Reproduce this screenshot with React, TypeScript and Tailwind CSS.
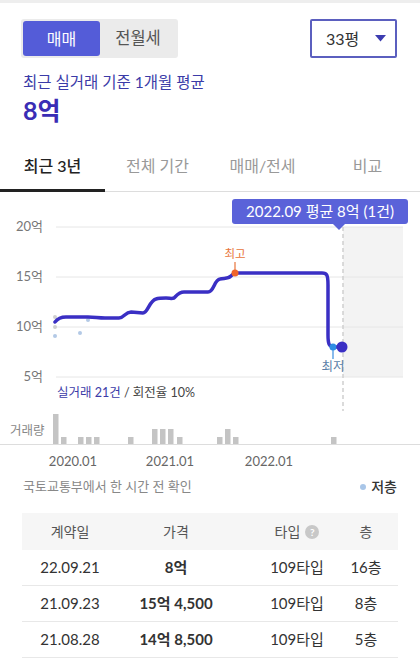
import { useState } from 'react';

const TABS = ['최근 3년', '전체 기간', '매매/전세', '비교'];

// volume bars: [x, height]
const BARS: [number, number][] = [
  [53, 30], [61, 7], [78, 7], [86, 7], [94, 7], [128, 7],
  [152, 15], [160, 15], [168, 15], [177, 7],
  [217, 7], [225, 15], [233, 7], [331, 7],
];

const ROWS = [
  { date: '22.09.21', price: '8억', type: '109타입', floor: '16층' },
  { date: '21.09.23', price: '15억 4,500', type: '109타입', floor: '8층' },
  { date: '21.08.28', price: '14억 8,500', type: '109타입', floor: '5층' },
];

const LINE =
  'M55 323 C58 319 61 318 66 318 L88 318 C95 318 98 319 105 319 L119 319 C124 319 125 313 131 313 L143 314 ' +
  'C148 314 149 302 156 300 C159 299 161 299 166 299 C170 299 171 300 174 299 C177 296 179 293 184 293 L208 293 ' +
  'C214 293 214 281 220 280 C225 279 228 280 231 277 C233 275 234 274 236 274 L322 274 C327 274 328 276 328 286 ' +
  'L328 336 C328 345 329 348 334 348 L342 348';

export default function App() {
  const [deal, setDeal] = useState<'sale' | 'rent'>('sale');
  const [tab, setTab] = useState(0);

  return (
    <div className="w-[420px] bg-white font-[Lato,'Noto_Sans_CJK_KR',sans-serif] text-[#333]">
      <div className="h-[3px] bg-[#eeeeee]" />

      <div className="flex items-center justify-between pl-[21px] pr-[23px] pt-4">
        <div className="flex h-[39px] w-[157px] items-center rounded-[3px] bg-[#ebebeb] p-[2px]">
          <button
            type="button"
            onClick={() => setDeal('sale')}
            className={[
              'h-full w-[77px] rounded-[3px] text-[16px]',
              deal === 'sale' ? 'bg-[#545cd8] text-white' : 'text-[#555]',
            ].join(' ')}
          >
            매매
          </button>
          <button
            type="button"
            onClick={() => setDeal('rent')}
            className={[
              'h-full flex-1 rounded-[3px] text-[16.5px]',
              deal === 'rent' ? 'bg-[#545cd8] text-white' : 'text-[#555]',
            ].join(' ')}
          >
            전월세
          </button>
        </div>
        <button
          type="button"
          className="flex h-[39px] w-[87px] items-center justify-between rounded-[2px] border-2 border-[#5b5fbf] pl-[14px] pr-[9px] text-[16px] text-[#333]"
        >
          33평
          <svg width="11" height="7" viewBox="0 0 11 7">
            <path d="M0 0 H11 L5.5 6.5 Z" fill="#3c3cb0" />
          </svg>
        </button>
      </div>

      <div className="px-[23px] pt-[14px]">
        <div className="text-[15.5px] leading-5 text-[#3b3ba8]">최근 실거래 기준 1개월 평균</div>
        <div className="mt-[2px] text-[25px] font-bold leading-8 text-[#3a2db5]">8억</div>
      </div>

      {/* period tabs */}
      <div className="mt-[19px] grid grid-cols-4 border-b border-[#ddd]">
        {TABS.map((t, i) => (
          <button
            key={t}
            type="button"
            onClick={() => setTab(i)}
            className={[
              '-mb-px h-[47px] border-b-[3px] pb-[3px] text-[16px]',
              i === tab ? 'border-[#222] font-medium text-[#222]' : 'border-transparent text-[#999]',
            ].join(' ')}
          >
            {t}
          </button>
        ))}
      </div>

      {/* chart */}
      <div className="relative h-[284px]">
        <svg width="420" height="284" viewBox="0 193 420 284" className="block">
          <rect x="343" y="228" width="60" height="150" fill="#f3f3f3" />
          {[228, 278, 328, 378].map((y) => (
            <line key={y} x1="56" x2="403" y1={y} y2={y} stroke="#e6e6e6" strokeWidth="1" />
          ))}
          {[
            ['20억', 232],
            ['15억', 282],
            ['10억', 332],
            ['5억', 382],
          ].map(([l, y]) => (
            <text key={l} x="43" y={y} textAnchor="end" fontSize="13" fill="#777">
              {l}
            </text>
          ))}
          <line x1="343" x2="343" y1="228" y2="412" stroke="#cfcfcf" strokeWidth="1.5" strokeDasharray="4 3" />

          {/* individual deals */}
          <circle cx="55" cy="318" r="2" fill="#cfcfcf" />
          <circle cx="55" cy="328" r="2" fill="#cfcfcf" />
          <circle cx="55" cy="337" r="2" fill="#b3c9e6" />
          <circle cx="80" cy="334" r="2" fill="#b3c9e6" />
          <circle cx="88" cy="321" r="2" fill="#b3c9e6" />

          <path d={LINE} fill="none" stroke="#3a2fc4" strokeWidth="3.5" strokeLinecap="round" strokeLinejoin="round" />

          <text x="235" y="259" textAnchor="middle" fontSize="11.5" fill="#e8743b">최고</text>
          <line x1="235" x2="235" y1="263" y2="272" stroke="#e8743b" strokeWidth="1.2" />
          <circle cx="235" cy="274" r="3.5" fill="#f0642a" />

          <line x1="333" x2="333" y1="350" y2="360" stroke="#3a8ee0" strokeWidth="1.2" />
          <circle cx="333" cy="348" r="3.5" fill="#2f8de4" />
          <text x="333" y="372" textAnchor="middle" fontSize="12.5" fill="#5b7fa8">최저</text>
          <circle cx="342" cy="348" r="5.5" fill="#3a2fc4" />

          <text x="57" y="398" fontSize="12.5" fill="#444">
            <tspan fill="#3b3ba8">실거래 21건</tspan> / 회전율 10%
          </text>

          <text x="10" y="436" fontSize="12.5" fill="#888">거래량</text>
          {BARS.map(([x, h]) => (
            <rect key={x} x={x} y={445 - h} width="5.5" height={h} fill="#c4c4c4" />
          ))}
          <line x1="0" x2="420" y1="445.5" y2="445.5" stroke="#ddd" strokeWidth="1" />

          {[
            ['2020.01', 73],
            ['2021.01', 170],
            ['2022.01', 269],
          ].map(([l, x]) => (
            <text key={l} x={x} y="467" textAnchor="middle" fontSize="13" fill="#666">
              {l}
            </text>
          ))}
        </svg>

        <div className="absolute left-[232px] top-[7px] flex h-[25px] w-[176px] items-center justify-center rounded-[3px] bg-[#5a62d9] text-[15px] text-white">
          2022.09 평균 8억 (1건)
          <span className="absolute left-[101px] top-[25px] h-0 w-0 border-x-[6px] border-t-[6px] border-x-transparent border-t-[#5a62d9]" />
        </div>
      </div>

      <div className="flex items-center justify-between px-[23px] text-[13px]">
        <span className="text-[#888]">국토교통부에서 한 시간 전 확인</span>
        <span className="flex items-center gap-[5px] text-[14px] font-medium text-[#333]">
          <span className="h-[6px] w-[6px] rounded-full bg-[#a9c6e8]" />
          저층
        </span>
      </div>

      {/* deals table */}
      <div className="mx-[22px] mt-[16px] text-center">
        <div className="grid h-[37px] grid-cols-[96px_116px_1fr_64px] items-center bg-[#f6f6f6] text-[14px] text-[#555]">
          <div>계약일</div>
          <div>가격</div>
          <div className="flex items-center justify-center gap-[5px] pl-[26px]">
            타입
            <span className="flex h-[14px] w-[14px] items-center justify-center rounded-full bg-[#c8c8c8] text-[10px] font-bold leading-none text-white">
              ?
            </span>
          </div>
          <div>층</div>
        </div>
        {ROWS.map((r) => (
          <div
            key={r.date}
            className="grid h-[36px] grid-cols-[96px_116px_1fr_64px] items-center border-b border-[#e8e8e8] text-[15px] text-[#333]"
          >
            <div>{r.date}</div>
            <div className="font-bold">{r.price}</div>
            <div className="pl-[26px]">{r.type}</div>
            <div>{r.floor}</div>
          </div>
        ))}
      </div>
    </div>
  );
}
